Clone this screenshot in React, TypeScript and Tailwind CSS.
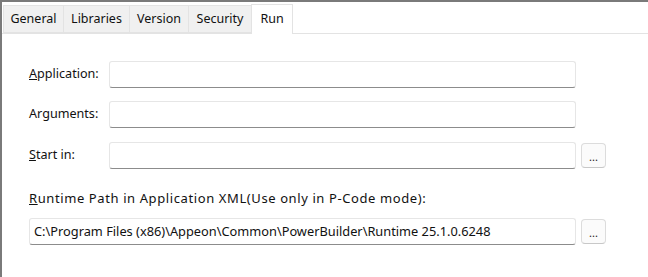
import React from "react";

const font = { fontFamily: '"Noto Sans", "Open Sans", sans-serif' };

function Tab({ label, w, active }: { label: string; w: number; active?: boolean }) {
  return (
    <div
      style={{ width: w }}
      className={
        active
          ? "h-[30px] -mb-px bg-white border border-b-0 border-[#e3e3e3] flex items-center justify-center text-[12.5px] text-[#111] relative z-10"
          : "h-[28px] bg-[#f0f0f0] border border-[#e3e3e3] border-r-0 flex items-center justify-center text-[12.5px] text-[#111]"
      }
    >
      {label}
    </div>
  );
}

function Field({ value, withBtn }: { value?: string; withBtn?: boolean }) {
  return (
    <div className="flex items-center">
      <div className="h-[27px] flex-1 bg-white border border-[#e6e6e6] border-b-[#8c8c8c] rounded-[3px] flex items-center pl-[4px] text-[12.8px] text-[#111] whitespace-nowrap overflow-hidden">
        {value}
      </div>
      <div className="w-[30px] flex justify-end">
        {withBtn && (
          <div className="w-[25px] h-[25px] bg-[#fbfbfb] border border-[#dcdcdc] border-b-[#c8c8c8] rounded-[4px] flex items-end justify-center pb-[5px] text-[11px] leading-none text-[#1a1a1a]">
            ...
          </div>
        )}
      </div>
    </div>
  );
}

export default function App() {
  return (
    <div style={font} className="w-[648px] h-[277px] bg-white border-t-[2px] border-l-[2px] border-[#7a7a7a] overflow-hidden">
      <div className="flex items-end pl-[1px] pt-[2px] border-b border-[#e3e3e3] bg-white">
        <Tab label="General" w={60} />
        <Tab label="Libraries" w={66} />
        <Tab label="Version" w={59} />
        <Tab label="Security" w={63} />
        <Tab label="Run" w={42} active />
      </div>
      <div className="pl-[27px] pr-[42px] pt-[27px]">
        <div className="flex items-center">
          <span className="w-[80px] text-[12.6px] text-[#111]"><u>A</u>pplication:</span>
          <div className="flex-1"><Field /></div>
        </div>
        <div className="flex items-center mt-[13px]">
          <span className="w-[80px] text-[12.6px] text-[#111]">Ar<u>g</u>uments:</span>
          <div className="flex-1"><Field /></div>
        </div>
        <div className="flex items-center mt-[14px]">
          <span className="w-[80px] text-[12.6px] text-[#111]"><u>S</u>tart in:</span>
          <div className="flex-1"><Field withBtn /></div>
        </div>
        <div className="mt-[20px] text-[13px] tracking-[0.6px] text-[#111] leading-[18px]"><u>R</u>untime Path in Application XML(Use only in P-Code mode):</div>
        <div className="mt-[11px]">
          <Field withBtn value="C:\Program Files (x86)\Appeon\Common\PowerBuilder\Runtime 25.1.0.6248" />
        </div>
      </div>
    </div>
  );
}
